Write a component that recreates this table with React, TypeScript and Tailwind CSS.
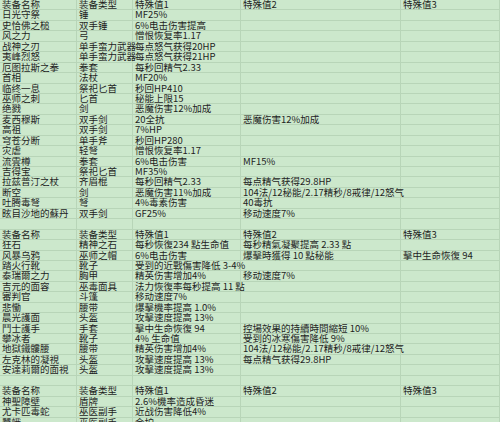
import React from "react";

const H = ["装备名称", "装备类型", "特殊值1", "特殊值2", "特殊值3"];

const rows: string[][] = [
  H,
  ["日光守祭", "锤", "MF25%", "", ""],
  ["史恰佛之槌", "双手锤", "6%电击伤害提高", "", ""],
  ["风之力", "弓", "憎恨恢复率1.17", "", ""],
  ["战神之刃", "单手蛮力武器", "每点怒气获得20HP", "", ""],
  ["夷峰烈怒", "单手蛮力武器", "每点怒气获得21HP", "", ""],
  ["厄图拉斯之拳", "拳套", "每秒回精气2.33", "", ""],
  ["首相", "法杖", "MF20%", "", ""],
  ["临终一息", "祭祀匕首", "秒回HP410", "", ""],
  ["巫师之刺", "匕首", "秘能上限15", "", ""],
  ["绝戮", "剑", "恶魔伤害12%加成", "", ""],
  ["麦西穆斯", "双手剑", "20全抗", "恶魔伤害12%加成", ""],
  ["高祖", "双手剑", "7%HP", "", ""],
  ["穹苍分断", "单手斧", "秒回HP280", "", ""],
  ["灾虐", "轻弩", "憎恨恢复率1.17", "", ""],
  ["流雲樽", "拳套", "6%电击伤害", "MF15%", ""],
  ["吉得宝", "祭祀匕首", "MF35%", "", ""],
  ["拉兹普汀之杖", "齐眉棍", "每秒回精气2.33", "每点精气获得29.8HP", ""],
  ["断空", "剑", "恶魔伤害11%加成", "104法/12秘能/2.17精秒/8戒律/12怒气", ""],
  ["吐腾毒弩", "弩", "4%毒素伤害", "40毒抗", ""],
  ["眩目沙地的蘇丹", "双手剑", "GF25%", "移动速度7%", ""],
  ["", "", "", "", ""],
  H,
  ["狂石", "精神之石", "每秒恢復234 點生命值", "每秒精氣凝聚提高 2.33 點", ""],
  ["风暴乌鸦", "巫师之帽", "6%电击伤害", "爆擊時獲得 10 點秘能", "擊中生命恢復 94"],
  ["踏火行靴", "靴子", "受到的近戰傷害降低 3-4%", "", ""],
  ["泰瑞爾之力", "胸甲", "精英伤害增加4%", "移动速度7%", ""],
  ["吉元的面容", "巫毒面具", "法力恢復率每秒提高 11 點", "", ""],
  ["審判官", "斗篷", "移动速度7%", "", ""],
  ["悲慟", "腰带", "爆擊機率提高 1.0%", "", ""],
  ["晨光護面", "头盔", "攻擊速度提高 13%", "", ""],
  ["鬥士護手", "手套", "擊中生命恢復 94", "控場效果的持續時間縮短 10%", ""],
  ["攀冰者", "靴子", "4% 生命值", "受到的冰寒傷害降低 9%", ""],
  ["地獄鐵髏腰", "腰带", "精英伤害增加4%", "104法/12秘能/2.17精秒/8戒律/12怒气", ""],
  ["左克林的凝視", "头盔", "攻擊速度提高 13%", "每点精气获得29.8HP", ""],
  ["安達莉爾的面視", "头盔", "攻擊速度提高 13%", "", ""],
  ["", "", "", "", ""],
  H,
  ["神聖障壁", "盾牌", "2.6%機率造成昏迷", "", ""],
  ["尤卡匹毒蛇", "巫医副手", "近战伤害降低4%", "", ""],
  ["蠶蛾", "巫医副手", "金护", "", ""],
];

export default function App() {
  return (
    <div
      className="w-[500px] h-[422px] overflow-hidden bg-[#cce8cc] text-[#1e1e1e]"
      style={{ fontFamily: '"Noto Sans CJK SC", "Noto Sans", sans-serif' }}
    >
      <div className="grid grid-cols-[77px_56px_108px_160px_99px]">
        {rows.map((r, i) =>
          r.map((c, j) => (
            <div
              key={i + "-" + j}
              className="h-[10.45px] border-b border-r border-[#b8d5b8] pl-[2px] text-[9.5px] leading-[9.45px] whitespace-nowrap overflow-visible"
            >
              {c}
            </div>
          ))
        )}
      </div>
    </div>
  );
}
